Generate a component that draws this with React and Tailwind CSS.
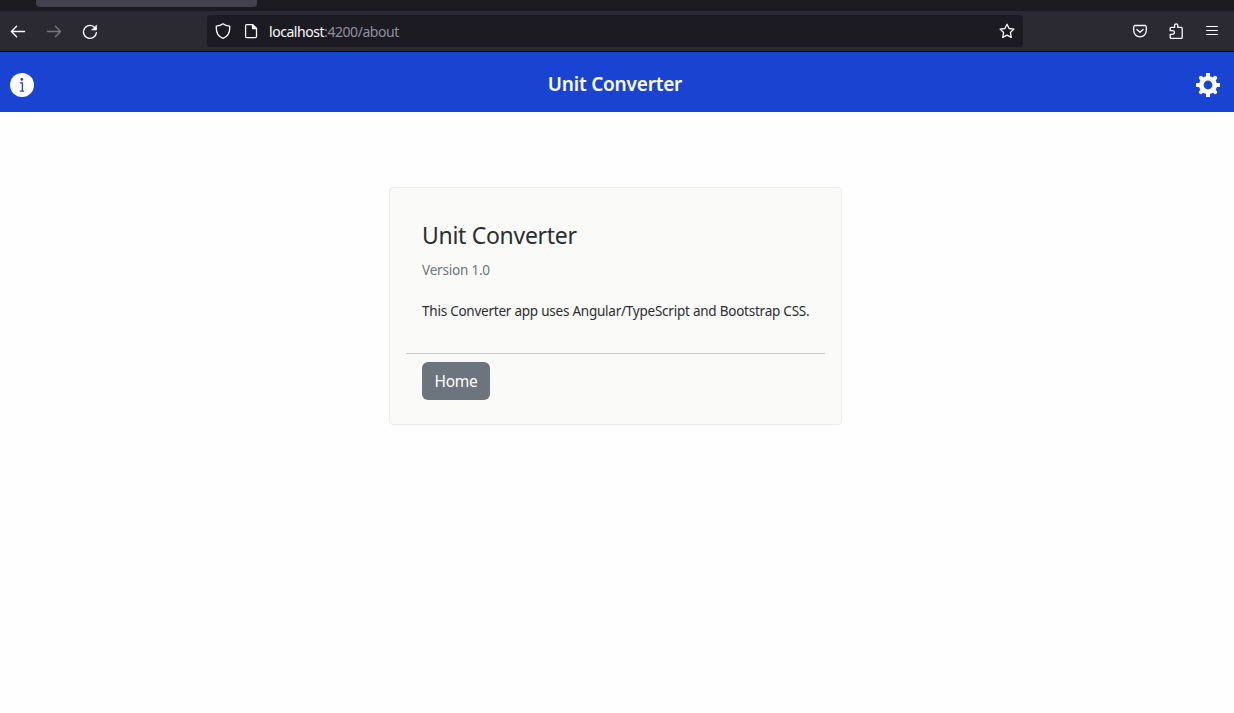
function Stroke({ children, className = 'text-[#fbfbfe]', width = 1.3 }) {
  return (
    <svg viewBox="0 0 16 16" className={`block h-4 w-4 shrink-0 ${className}`} fill="none" stroke="currentColor" strokeWidth={width} strokeLinecap="round" strokeLinejoin="round">
      {children}
    </svg>
  );
}

function BrowserChrome() {
  return (
    <div className="h-[52px] border-b border-[#0c0c0d] bg-[#2b2a33]">
      <div className="h-[11px] bg-[#1c1b22] pl-9">
        <div className="h-[7px] w-[221px] rounded-b bg-[#42414d]" />
      </div>
      <div className="flex h-10 items-center pl-[10px] pr-[14px]">
        <div className="flex w-[197px] gap-5 pt-px">
          <Stroke width={1.3}><path d="M14.6 7.5H1.4M6.6 2.2L1.4 7.5L6.6 12.8" /></Stroke>
          <Stroke className="text-[#77767c]" width={1.3}><path d="M1.4 7.5H14.6M9.4 2.2L14.6 7.5L9.4 12.8" /></Stroke>
          <Stroke width={1.4}>
            <path d="M13 3.8A6.5 6.5 0 1 0 14.4 8.6" />
            <path d="M14.6 1.3V6H9.9Z" fill="currentColor" strokeWidth="0.6" />
          </Stroke>
        </div>
        <div className="flex h-8 w-[816px] items-center rounded bg-[#1c1b22] pl-2 pr-2">
          <Stroke><path d="M8 .8C6 2.4 3.5 3 1.3 3.2C.9 9.2 2.7 13.4 8 15.4C13.3 13.4 15.1 9.2 14.7 3.2C12.5 3 10 2.4 8 .8Z" /></Stroke>
          <div className="ml-3">
            <Stroke>
              <path d="M9.6 1.6H3.6A1 1 0 0 0 2.6 2.6V13.6A1 1 0 0 0 3.6 14.6H12.5A1 1 0 0 0 13.5 13.6V5.5Z" />
              <path d="M9.5 1.6V5.6H13.5Z" fill="currentColor" />
            </Stroke>
          </div>
          <div className="ml-[10px] pt-[2px] font-['Noto_Sans','Open_Sans',sans-serif] text-[14px] leading-5 tracking-[-0.45px] text-[#8f8f9d]">
            <span className="text-[#fbfbfe]">localhost</span>:4200/about
          </div>
          <div className="ml-auto">
            <Stroke><path d="M8 1.2L10.1 5.5L14.9 6.1L11.4 9.5L12.3 14.4L8 12.1L3.7 14.4L4.6 9.5L1.1 6.1L5.9 5.5Z" /></Stroke>
          </div>
        </div>
        <div className="ml-auto flex gap-5">
          <Stroke>
            <path d="M3.2 2.5H12.8A1.4 1.4 0 0 1 14.3 4V7.5A6.3 6.3 0 0 1 1.7 7.5V4A1.4 1.4 0 0 1 3.2 2.5Z" />
            <path d="M4.9 6.4L8 9.2L11.1 6.4" />
          </Stroke>
          <Stroke>
            <path d="M2.2 7.5V5.4A1 1 0 0 1 3.2 4.4H6.6V2.4A1.6 1.6 0 0 1 9.8 2.4V4.4H13.2A1 1 0 0 1 14.2 5.4V14.4A1 1 0 0 1 13.2 15.4H3.2A1 1 0 0 1 2.2 14.4V11.3H4.6A1.8 1.8 0 0 0 4.6 7.7H2.2Z" />
          </Stroke>
          <Stroke width={1.2}><path d="M2.6 3.5H13.4M2.6 7.5H13.4M2.6 11.5H13.4" /></Stroke>
        </div>
      </div>
    </div>
  );
}

function AppHeader() {
  return (
    <header className="flex h-[60px] items-center justify-between bg-[#1944d2] pl-[10px] pr-[14px] pt-[6px] text-white">
      <svg viewBox="0 0 24 24" className="h-6 w-6" aria-label="About">
        <circle cx="12" cy="12" r="12" fill="currentColor" />
        <circle cx="11.8" cy="6.4" r="1.4" fill="#1944d2" />
        <path d="M9.8 9.8H12.4V18M9.8 18.2H14.2" fill="none" stroke="#1944d2" strokeWidth="1.3" />
      </svg>
      <h1 className="pb-[2px] font-['Noto_Sans','Open_Sans',sans-serif] text-[19px] font-semibold leading-7 tracking-[-0.2px]">Unit Converter</h1>
      <svg viewBox="0 0 24 24" className="h-6 w-6" aria-label="Settings">
        <g fill="none" stroke="currentColor">
          <circle cx="12" cy="12" r="6.75" strokeWidth="4.7" />
          <path d="M12 0V4M12 20V24M0 12H4M20 12H24" strokeWidth="4" />
          <path d="M4.8 4.8L6.5 6.5M17.5 17.5L19.2 19.2M4.8 19.2L6.5 17.5M17.5 6.5L19.2 4.8" strokeWidth="4" strokeLinecap="round" />
        </g>
      </svg>
    </header>
  );
}

function AboutCard() {
  return (
    <section className="ml-[389px] mt-[75px] h-[238px] w-[453px] rounded border border-[#ededed] bg-[#fafaf8] px-4 pt-[31px] text-[#2b2e31]">
      <div className="h-[135px] border-b border-[#cccccb] px-4">
        <h2 className="whitespace-nowrap text-[23px] leading-[32px] tracking-[-0.3px]">Unit Converter</h2>
        <p className="mt-[9px] text-[13.5px] leading-5 tracking-[-0.2px] text-[#6c757d]">Version 1.0</p>
        <p className="mt-[21px] whitespace-nowrap text-[13.5px] leading-5 tracking-[-0.235px]">This Converter app uses Angular/TypeScript and Bootstrap CSS.</p>
      </div>
      <button className="ml-4 mt-2 h-[38px] w-[68px] rounded-md bg-[#6c757d] pt-[2px] text-[15.5px] tracking-[-0.3px] text-white">Home</button>
    </section>
  );
}

export default function App() {
  return (
    <div className="h-[713px] w-[1234px] overflow-hidden bg-[#fefefe] font-['Noto_Sans','Open_Sans',sans-serif]">
      <BrowserChrome />
      <AppHeader />
      <AboutCard />
    </div>
  );
}
